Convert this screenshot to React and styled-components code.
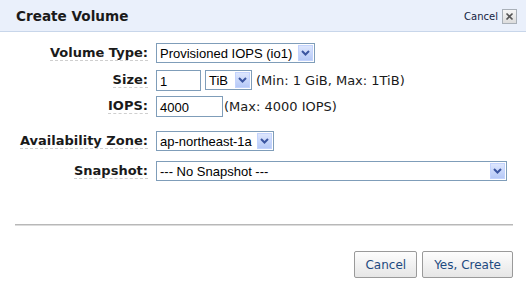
import styled, { createGlobalStyle } from 'styled-components'

const GlobalStyle = createGlobalStyle`
	html, body {
		margin: 0;
		padding: 0;
		background: #ffffff;
	}
	body {
		width: 526px;
		height: 292px;
		overflow: hidden;
		font-family: 'DejaVu Sans', Verdana, sans-serif;
	}
`

const Dialog = styled.div`
	width: 526px;
	height: 292px;
	background: #ffffff;
	display: flex;
	flex-direction: column;
`

const Header = styled.div`
	height: 31px;
	background: #eaf0fb;
	border-bottom: 1px solid #c8d6ea;
	display: flex;
	align-items: center;
	justify-content: space-between;
	padding: 0 9px 0 16px;
`

const Title = styled.h1`
	margin: 0;
	font-size: 13.6px;
	font-weight: bold;
	color: #1a1a1a;
	padding-top: 1px;
`

const CloseLink = styled.a`
	display: flex;
	align-items: center;
	gap: 4px;
	font-size: 10px;
	color: #14233f;
	text-decoration: none;
	padding-top: 2px;
`

const CloseBox = styled.span`
	width: 13px;
	height: 13px;
	border: 1px solid #a9b0b8;
	background: linear-gradient(#f6f6f6, #dcdcdc);
	display: flex;
	align-items: center;
	justify-content: center;
	svg {
		display: block;
	}
`

const Form = styled.div`
	display: grid;
	grid-template-columns: 148px 1fr;
	column-gap: 8px;
	align-items: center;
	padding-top: 8px;
`

const Label = styled.label`
	justify-self: end;
	font-size: 13px;
	font-weight: bold;
	color: #1a1a1a;
	border-bottom: 1px dashed #cfcfcf;
	line-height: 15px;
	margin-top: ${(p) => p.$top || 0}px;
`

const Field = styled.div`
	display: flex;
	align-items: center;
	gap: ${(p) => p.$gap || 4}px;
	height: ${(p) => p.$h || 26}px;
	margin-top: ${(p) => p.$top || 0}px;
`

const SelectBox = styled.div`
	width: ${(p) => p.$w}px;
	height: 20px;
	box-sizing: border-box;
	border: 1px solid #7f9db9;
	background: #ffffff;
	display: flex;
	align-items: center;
	justify-content: space-between;
	padding: 1px 1px 1px 3px;
	font-family: 'Liberation Sans', Arial, sans-serif;
	font-size: 13px;
	color: #000000;
`

const Arrow = styled.span`
	width: 15px;
	height: 16px;
	box-sizing: border-box;
	border: 1px solid #c3d3fd;
	background: linear-gradient(#dde6fd, #b6c9f7);
	display: flex;
	align-items: center;
	justify-content: center;
`

const TextInput = styled.div`
	width: ${(p) => p.$w}px;
	height: 21px;
	box-sizing: border-box;
	border: 1px solid #7f9db9;
	padding: 3px 3px 0;
	font-family: 'Liberation Sans', Arial, sans-serif;
	font-size: 13px;
	line-height: 16px;
	color: #000000;
`

const Hint = styled.span`
	font-size: 13px;
	color: #1a1a1a;
	white-space: pre;
`

const Divider = styled.hr`
	margin: 40px 13px 0 15px;
	border: none;
	border-top: 1px solid #b8b8b8;
	border-bottom: 1px solid #dcdcdc;
`

const Footer = styled.div`
	display: flex;
	justify-content: flex-end;
	gap: 5px;
	padding: 25px 13px 0 0;
`

const Button = styled.button`
	height: 27px;
	padding: 0 ${(p) => p.$pad || 10}px;
	border: 1px solid #9a9a9a;
	border-radius: 2px;
	background: linear-gradient(#fdfdfd, #e6e6e6);
	font-family: 'DejaVu Sans', Verdana, sans-serif;
	font-size: 12px;
	color: #1d4a80;
`

const Chevron = () => (
	<svg width='9' height='6' viewBox='0 0 9 6'>
		<path d='M1 1 L4.5 4.5 L8 1' fill='none' stroke='#3b55a0' strokeWidth='2' />
	</svg>
)

const Select = ({ width, value }) => (
	<SelectBox $w={width}>
		<span>{value}</span>
		<Arrow>
			<Chevron />
		</Arrow>
	</SelectBox>
)

const App = () => {
	return (
		<>
			<GlobalStyle />
			<Dialog>
				<Header>
					<Title>Create Volume</Title>
					<CloseLink>
						Cancel
						<CloseBox>
							<svg width='9' height='9' viewBox='0 0 9 9'>
								<path d='M1.5 1.5 L7.5 7.5 M7.5 1.5 L1.5 7.5' stroke='#555' strokeWidth='1.6' />
							</svg>
						</CloseBox>
					</CloseLink>
				</Header>

				<Form>
					<Label>Volume Type:</Label>
					<Field>
						<Select width={159} value='Provisioned IOPS (io1)' />
					</Field>

					<Label>Size:</Label>
					<Field $top={1}>
						<TextInput $w={45}>1</TextInput>
						<Select width={47} value='TiB' />
						<Hint>(Min: 1 GiB, Max: 1TiB)</Hint>
					</Field>

					<Label>IOPS:</Label>
					<Field $gap={1}>
						<TextInput $w={67}>4000</TextInput>
						<Hint>(Max: 4000 IOPS)</Hint>
					</Field>

					<Label $top={9}>Availability Zone:</Label>
					<Field $top={9}>
						<Select width={118} value='ap-northeast-1a' />
					</Field>

					<Label $top={4}>Snapshot:</Label>
					<Field $top={4}>
						<Select width={351} value='--- No Snapshot ---' />
					</Field>
				</Form>

				<Divider />

				<Footer>
					<Button $pad={10}>Cancel</Button>
					<Button $pad={11}>Yes, Create</Button>
				</Footer>
			</Dialog>
		</>
	)
}

export default App
